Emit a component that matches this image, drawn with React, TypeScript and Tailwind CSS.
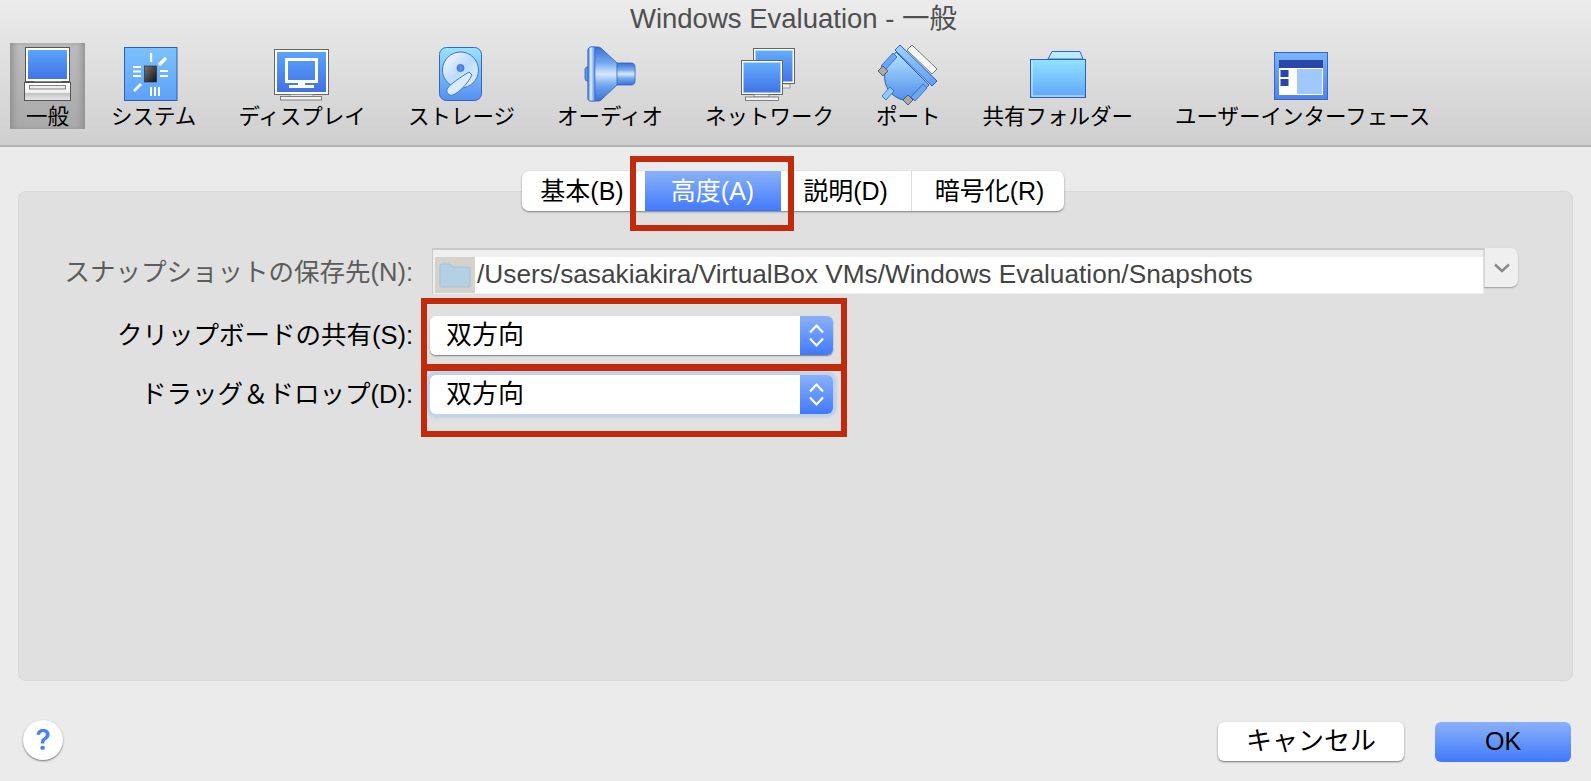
import React from 'react';

const ComputerIcon = () => (
    <svg width="56" height="58" viewBox="0 0 56 58">
        <defs>
            <linearGradient id="cpScreen" x1="0" y1="0" x2="0" y2="1">
                <stop offset="0" stopColor="#5aa4fb" />
                <stop offset="1" stopColor="#4273e6" />
            </linearGradient>
            <linearGradient id="cpBase" x1="0" y1="0" x2="0" y2="1">
                <stop offset="0" stopColor="#ffffff" />
                <stop offset="0.55" stopColor="#f2f2f2" />
                <stop offset="0.6" stopColor="#c4c4c4" />
                <stop offset="1" stopColor="#e8e8e8" />
            </linearGradient>
        </defs>
        <rect x="5.5" y="1.5" width="44" height="34" fill="#fff" stroke="#555" />
        <rect x="8" y="4" width="39" height="29" fill="url(#cpScreen)" />
        <rect x="14" y="35.5" width="27" height="3" fill="#e4e4e4" stroke="#777" strokeWidth="0.6" />
        <rect x="4.5" y="36.5" width="46" height="18" fill="url(#cpBase)" stroke="#555" />
        <rect x="9.5" y="39.5" width="36" height="3.5" fill="#eee" stroke="#666" strokeWidth="0.8" />
    </svg>
);

const SystemIcon = () => (
    <svg width="56" height="58" viewBox="0 0 56 58" className="-translate-x-[3px]">
        <defs>
            <linearGradient id="sysBg" x1="0" y1="0" x2="0" y2="1">
                <stop offset="0" stopColor="#7cc2fd" />
                <stop offset="1" stopColor="#5f9ff8" />
            </linearGradient>
            <linearGradient id="sysChip" x1="0" y1="0" x2="1" y2="1">
                <stop offset="0" stopColor="#777" />
                <stop offset="1" stopColor="#111" />
            </linearGradient>
        </defs>
        <rect x="1.5" y="1.5" width="52.5" height="53" fill="url(#sysBg)" stroke="#2e5fb5" />
        <rect x="21.5" y="20" width="12" height="16" fill="url(#sysChip)" stroke="#222" strokeWidth="0.6" />
        <rect x="27" y="7" width="2.2" height="9" fill="#fff" />
        <path d="M36 19 L43 12" stroke="#fff" strokeWidth="3.2" />
        <rect x="10" y="20" width="8" height="2" fill="#fff" />
        <rect x="10" y="24.5" width="8" height="2" fill="#fff" />
        <rect x="10" y="29" width="8" height="2" fill="#fff" />
        <rect x="37" y="24" width="8" height="2" fill="#fff" />
        <rect x="37" y="29" width="8" height="2" fill="#fff" />
        <path d="M11 45 L18 38" stroke="#fff" strokeWidth="2.6" />
        <rect x="27" y="41" width="2" height="9" fill="#fff" />
        <rect x="31" y="41" width="2" height="9" fill="#fff" />
        <rect x="35" y="41" width="2" height="9" fill="#fff" />
    </svg>
);

const DisplayIcon = () => (
    <svg width="56" height="58" viewBox="0 0 56 58">
        <defs>
            <linearGradient id="dpBg" x1="0" y1="0" x2="0" y2="1">
                <stop offset="0" stopColor="#5aa3fb" />
                <stop offset="1" stopColor="#4271e4" />
            </linearGradient>
        </defs>
        <rect x="0.5" y="3.5" width="54" height="45" fill="#fff" stroke="#666" />
        <rect x="3" y="6" width="49" height="40" fill="url(#dpBg)" />
        <rect x="12.5" y="13.5" width="30" height="22" fill="none" stroke="#fff" strokeWidth="3" />
        <rect x="24" y="37" width="7" height="2" fill="#fff" />
        <rect x="15" y="39" width="25" height="3" fill="#fff" />
        <rect x="16" y="48.5" width="23" height="2.5" fill="#e8e8e8" stroke="#777" strokeWidth="0.6" />
        <rect x="6.5" y="50.5" width="41" height="3.5" fill="#f2f2f2" stroke="#666" strokeWidth="0.8" />
    </svg>
);

const StorageIcon = () => (
    <svg width="56" height="58" viewBox="0 0 56 58" className="translate-x-[3px]">
        <defs>
            <linearGradient id="stBg" x1="0" y1="0" x2="0" y2="1">
                <stop offset="0" stopColor="#9be4fe" />
                <stop offset="1" stopColor="#558ff0" />
            </linearGradient>
            <linearGradient id="stDisc" x1="0" y1="0" x2="1" y2="1">
                <stop offset="0" stopColor="#ffffff" />
                <stop offset="0.5" stopColor="#bcdcfb" />
                <stop offset="1" stopColor="#e9f5ff" />
            </linearGradient>
        </defs>
        <rect x="3.5" y="1.5" width="42" height="53" rx="7" fill="url(#stBg)" stroke="#3566c6" />
        <circle cx="24.5" cy="24" r="18" fill="url(#stDisc)" stroke="#3f74cf" strokeWidth="1" />
        <circle cx="24.5" cy="22" r="3.6" fill="#4f8ee6" stroke="#2f5fb8" strokeWidth="0.7" />
        <path d="M33 26 L36 29 C32 37 24 46 17 49 C13 50 10 47 11 43 C14 38 25 31 33 26 Z" fill="#d8ecfc" stroke="#3f74cf" strokeWidth="1" />
    </svg>
);

const AudioIcon = () => (
    <svg width="56" height="58" viewBox="0 0 56 58" className="translate-x-[2px]">
        <defs>
            <linearGradient id="auBody" x1="0" y1="0" x2="0" y2="1">
                <stop offset="0" stopColor="#3a6fd4" />
                <stop offset="0.3" stopColor="#74a9ee" />
                <stop offset="0.5" stopColor="#d6e9fc" />
                <stop offset="0.7" stopColor="#74a9ee" />
                <stop offset="1" stopColor="#3a6fd4" />
            </linearGradient>
            <linearGradient id="auCap" x1="0" y1="0" x2="1" y2="0">
                <stop offset="0" stopColor="#3d78dc" />
                <stop offset="0.4" stopColor="#e2f1ff" />
                <stop offset="1" stopColor="#4d8ae6" />
            </linearGradient>
        </defs>
        <rect x="1" y="21" width="6" height="14" rx="2.5" fill="#5f9bee" stroke="#2f5fb8" strokeWidth="0.8" />
        <path d="M30 17 H47 C50 17 51 19 51 21 V35 C51 38 49 39 47 39 H30 Z" fill="url(#auBody)" stroke="#2f5fb8" strokeWidth="0.8" />
        <path d="M7 1 H14 C16 1 17 2 18 3 L33 17 V39 L18 53 C17 55 15 55 14 55 H7 C5 55 4 54 4 52 V5 C4 3 5 1 7 1 Z" fill="url(#auBody)" stroke="#2f5fb8" strokeWidth="0.8" />
        <path d="M7 1 C5 1 4 3 4 5 V52 C4 54 5 55 7 55 H11 V1 Z" fill="url(#auCap)" stroke="#2f5fb8" strokeWidth="0.6" />
    </svg>
);

const NetworkIcon = () => (
    <svg width="58" height="58" viewBox="0 0 58 58">
        <defs>
            <linearGradient id="nwBg" x1="0" y1="0" x2="0" y2="1">
                <stop offset="0" stopColor="#62adfc" />
                <stop offset="1" stopColor="#4273e6" />
            </linearGradient>
        </defs>
        <rect x="13.5" y="2.5" width="41" height="35" fill="#fff" stroke="#666" />
        <rect x="15.5" y="4.5" width="37" height="31" fill="url(#nwBg)" />
        <rect x="33" y="38" width="17" height="4" fill="#eee" stroke="#777" strokeWidth="0.7" />
        <rect x="1.5" y="14.5" width="41" height="34" fill="#fff" stroke="#666" />
        <rect x="3.5" y="16.5" width="37" height="30" fill="url(#nwBg)" />
        <rect x="14" y="48.5" width="15" height="2.5" fill="#eee" stroke="#777" strokeWidth="0.7" />
        <rect x="5.5" y="51" width="33" height="3.5" fill="#f2f2f2" stroke="#666" strokeWidth="0.8" />
    </svg>
);

const PortIcon = () => (
    <svg width="62" height="62" viewBox="0 0 62 62" className="-mt-[2px]">
        <defs>
            <linearGradient id="ptBody" x1="0" y1="0" x2="0" y2="1">
                <stop offset="0" stopColor="#b7e5fd" />
                <stop offset="1" stopColor="#4f8eee" />
            </linearGradient>
            <linearGradient id="ptBar" x1="0" y1="0" x2="1" y2="1">
                <stop offset="0" stopColor="#9ad6fd" />
                <stop offset="1" stopColor="#5e9df2" />
            </linearGradient>
        </defs>
        <path d="M35 1 L60 25 L55 30 L30 6 Z" fill="#f7f7f7" stroke="#555" strokeWidth="0.8" />
        <path d="M23 1 L60 37 L55 42 L18 6 Z" fill="url(#ptBar)" stroke="#2f5fb8" strokeWidth="1" />
        <path d="M19 8 L52 41 L39 54 C31 59 20 56 13 48 C7 41 6 31 10 22 Z" fill="url(#ptBody)" stroke="#2f5fb8" strokeWidth="1" />
        <path d="M16 9 L20 13 L8 26 L4 22 Z" fill="#6aa8f4" stroke="#2f5fb8" strokeWidth="0.8" />
        <path d="M50 44 L46 40 L34 53 L38 57 Z" fill="#6aa8f4" stroke="#2f5fb8" strokeWidth="0.8" />
        <path d="M1 27 L6 22 L11 27 L6 32 Z" fill="#aaa" stroke="#444" strokeWidth="0.8" />
        <path d="M26 56 L31 51 L36 56 L31 61 Z" fill="#aaa" stroke="#444" strokeWidth="0.8" />
        <path d="M17 47 L9 56 L5 52 L13 43 Z" fill="#8fcafa" stroke="#2f5fb8" strokeWidth="0.8" />
    </svg>
);

const FolderIcon = () => (
    <svg width="56" height="58" viewBox="0 0 56 58">
        <defs>
            <linearGradient id="fdBg" x1="0" y1="0" x2="0" y2="1">
                <stop offset="0" stopColor="#92e3fe" />
                <stop offset="1" stopColor="#5fa5fb" />
            </linearGradient>
        </defs>
        <path d="M18 13 L22 5.5 H50 L53 13 H18 Z" fill="#b9ecfd" stroke="#3566c6" />
        <rect x="0.5" y="13.5" width="55" height="38" fill="url(#fdBg)" stroke="#2f5fb8" />
        <path d="M2 15 V50 H54" fill="none" stroke="#d7f3ff" strokeWidth="1" />
    </svg>
);

const InterfaceIcon = () => (
    <svg width="56" height="58" viewBox="0 0 56 58" className="-translate-x-[2px]">
        <defs>
            <linearGradient id="uiBg" x1="0" y1="0" x2="0" y2="1">
                <stop offset="0" stopColor="#7ab5fb" />
                <stop offset="1" stopColor="#4d83ea" />
            </linearGradient>
        </defs>
        <rect x="1.5" y="6.5" width="53" height="47" fill="url(#uiBg)" stroke="#3566c6" />
        <rect x="6" y="14" width="44" height="35" fill="#fff" />
        <rect x="6" y="14" width="44" height="8" fill="#2a46a8" />
        <rect x="7.5" y="24" width="8" height="7" fill="#2a46a8" />
        <rect x="7.5" y="33" width="8" height="7" fill="#2a46a8" />
        <rect x="24" y="23" width="25" height="25" fill="#a0c8fd" />
    </svg>
);

const SelectChevrons = () => (
    <svg width="15" height="27" viewBox="0 0 15 27" fill="none" stroke="#fff" strokeWidth="2.2">
        <path d="M1 10.5 L7.5 3.5 L14 10.5" />
        <path d="M1 16.5 L7.5 23.5 L14 16.5" />
    </svg>
);

const tools = [
    { label: '一般', icon: <ComputerIcon />, active: true },
    { label: 'システム', icon: <SystemIcon /> },
    { label: 'ディスプレイ', icon: <DisplayIcon /> },
    { label: 'ストレージ', icon: <StorageIcon /> },
    { label: 'オーディオ', icon: <AudioIcon /> },
    { label: 'ネットワーク', icon: <NetworkIcon /> },
    { label: 'ポート', icon: <PortIcon /> },
    { label: '共有フォルダー', icon: <FolderIcon /> },
    { label: 'ユーザーインターフェース', icon: <InterfaceIcon /> },
];

const Select = ({ focused }: { focused?: boolean }) => (
    <div className={`-ml-[2px] flex h-[39px] w-[403px] rounded-[6px] ${focused ? 'shadow-[0_0_2px_4px_#bfd3ee]' : 'shadow-[0_1px_1.5px_rgba(0,0,0,0.45)]'}`}>
        <div className="flex flex-1 items-center rounded-l-[6px] bg-white pl-[16px] text-[26px] text-black">双方向</div>
        <div className="flex w-[33px] items-center justify-center rounded-r-[6px] bg-gradient-to-b from-[#8ab1f8] to-[#4278fb]">
            <SelectChevrons />
        </div>
    </div>
);

const RedFrame = ({ className }: { className: string }) => (
    <div className={`absolute border-[6px] border-[#c12b0c] ${className}`} />
);

export default function App() {
    return (
        <div className="relative flex h-[781px] w-full flex-col overflow-hidden bg-[#ebebeb] font-['Liberation_Sans','Noto_Sans_CJK_JP',sans-serif]">
            <div className="h-[147px] border-b-[2px] border-[#b2b2b2] bg-gradient-to-b from-[#ececec] to-[#cfcfcf]">
                <div className="h-[43px] pt-[1px] pr-[4px] text-center text-[27.5px] leading-[36px] text-[#4f4f4f]">Windows Evaluation - 一般</div>
                <div className="flex gap-[10px] pl-[10px]">
                    {tools.map((tool) => (
                        <div
                            key={tool.label}
                            className={`flex h-[86px] flex-col items-center px-[16px] ${tool.active ? 'bg-gradient-to-b from-[#bcbcbc] to-[#a9a9a9] shadow-[inset_6px_0_6px_-3px_#8f8f8f,inset_-6px_0_6px_-3px_#8f8f8f]' : ''}`}
                        >
                            <div className="flex h-[62px] w-0 items-start justify-center pt-[3px] [&>svg]:shrink-0">{tool.icon}</div>
                            <div className="whitespace-nowrap text-[21.5px] leading-[24px] text-black">{tool.label}</div>
                        </div>
                    ))}
                </div>
            </div>

            <div className="px-[18px] pt-[44px]">
                <div className="h-[490px] rounded-[8px] border border-[#d8d8d8] bg-[#e0e0e0]">
                    <div className="-mt-[21px] mr-[6px] flex justify-center">
                        <div className="flex h-[40px] rounded-[7px] bg-white pb-0 text-[25px] text-black shadow-[0_1px_2px_rgba(0,0,0,0.45)]">
                            <div className="flex w-[123px] items-center justify-center pt-[2px] pr-[2px]">基本(B)</div>
                            <div className="flex w-[136px] items-center justify-center bg-gradient-to-b from-[#8ab1f8] to-[#4278fb] pt-[2px] text-white">高度(A)</div>
                            <div className="flex w-[131px] items-center justify-center border-r border-[#dcdcdc] pt-[2px]">説明(D)</div>
                            <div className="flex w-[152px] items-center justify-center pt-[2px] pl-[4px]">暗号化(R)</div>
                        </div>
                    </div>

                    <div className="mt-[37px] grid grid-cols-[394px_1086px] items-center gap-x-[19px]">
                        <div className="pt-[3px] text-right text-[25.5px] text-[#5c5c5c]">スナップショットの保存先(N):</div>
                        <div className="flex h-[46px]">
                            <div className="w-[1052px] border-t-[2px] border-l border-[#c9c9c9] bg-[#efefef] pt-[7px] pl-[2px]">
                                <div className="flex h-[36px] w-[1048px] items-center bg-white">
                                    <div className="flex h-[36px] w-[40px] items-center justify-center bg-[#d5d2cc]">
                                        <svg width="32" height="26" viewBox="0 0 32 26">
                                            <path d="M1 4 Q1 2 3 2 H11 L14 5 H30 Q31 5 31 6 V24 Q31 25 30 25 H2 Q1 25 1 24 Z" fill="#b3d0e4" stroke="#a3c2d8" />
                                        </svg>
                                    </div>
                                    <span className="pl-[2px] text-[26.25px] whitespace-nowrap text-[#444444]">/Users/sasakiakira/VirtualBox VMs/Windows Evaluation/Snapshots</span>
                                </div>
                            </div>
                            <div className="flex h-[39px] w-[34px] items-center justify-center rounded-r-[7px] border-l border-[#d6d6d6] bg-[#efefef] shadow-[0_1px_1.5px_rgba(0,0,0,0.3)]">
                                <svg width="16" height="10" viewBox="0 0 16 10" fill="none" stroke="#8a8a8a" strokeWidth="2.4">
                                    <path d="M1 1.5 L8 8 L15 1.5" />
                                </svg>
                            </div>
                        </div>

                        <div className="mt-[22px] text-right text-[25.5px] text-black">クリップボードの共有(S):</div>
                        <div className="mt-[22px]"><Select /></div>

                        <div className="mt-[20px] text-right text-[25.5px] text-black">ドラッグ＆ドロップ(D):</div>
                        <div className="mt-[20px]"><Select focused /></div>
                    </div>
                </div>
            </div>

            <div className="mt-[39px] flex items-start justify-between pr-[20px] pl-[23px]">
                <div className="flex h-[40px] w-[40px] items-center justify-center rounded-full bg-white font-['Inter',sans-serif] text-[28px] font-semibold text-[#4a80f5] shadow-[0_1px_2px_rgba(0,0,0,0.5)]">?</div>
                <div className="mt-[2px] flex gap-[31px]">
                    <div className="flex h-[39px] w-[186px] items-center justify-center rounded-[6px] bg-white text-[26px] text-black shadow-[0_1px_2px_rgba(0,0,0,0.5)]">キャンセル</div>
                    <div className="flex h-[40px] w-[136px] items-center justify-center rounded-[6px] bg-gradient-to-b from-[#8ab1f8] to-[#4278fb] text-[25px] text-black">OK</div>
                </div>
            </div>

            <RedFrame className="top-[156px] left-[630px] h-[75px] w-[164px]" />
            <RedFrame className="top-[298px] left-[421px] h-[72px] w-[426px]" />
            <RedFrame className="top-[365px] left-[421px] h-[72px] w-[426px]" />
        </div>
    );
}
